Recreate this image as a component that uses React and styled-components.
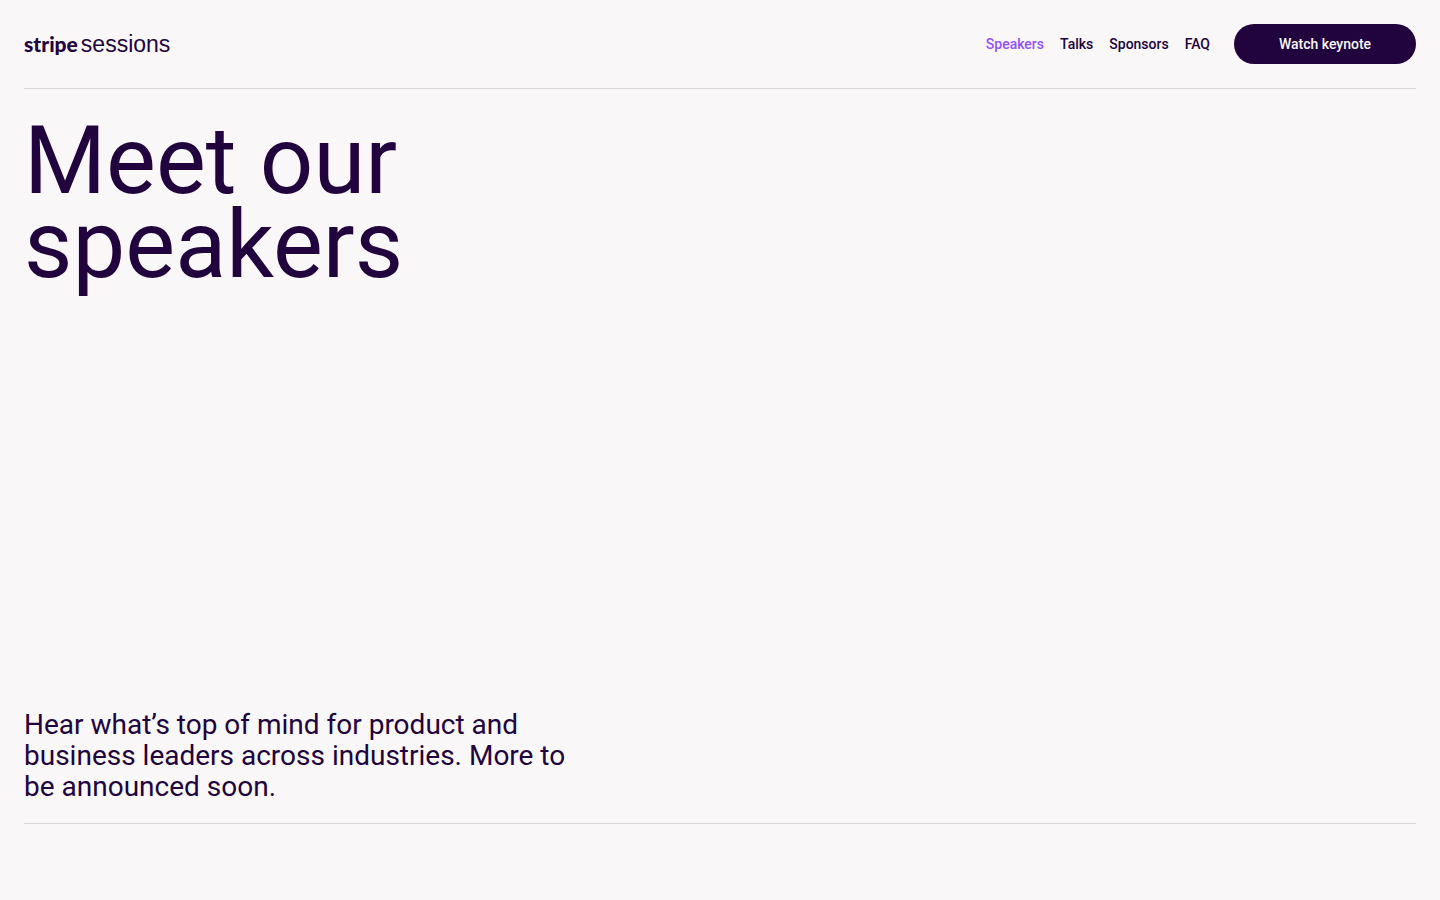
import React from "react";
import styled, { createGlobalStyle } from "styled-components";

const ink = "#21033d";
const violet = "#9450fb";
const line = "#dad8dc";
const paper = "#f9f7f8";

const GlobalStyle = createGlobalStyle`
  *, *::before, *::after { box-sizing: border-box; }
  body {
    margin: 0;
    background: ${paper};
    color: ${ink};
    font-family: Roboto, Arial, sans-serif;
  }
`;

const Page = styled.div`
  display: flex;
  flex-direction: column;
  min-height: 100vh;
  padding: 0 24px 76px;
`;

const Header = styled.header`
  display: flex;
  align-items: center;
  justify-content: space-between;
  padding: 24px 0;
  border-bottom: 1px solid ${line};
`;

const Logo = styled.a`
  display: flex;
  align-items: baseline;
  gap: 3px;
  color: inherit;
  text-decoration: none;
  line-height: 24px;
`;

const Brand = styled.span`
  font-family: Lato, sans-serif;
  font-size: 21px;
  font-weight: 900;
`;

const EventName = styled.span`
  font-family: "Liberation Sans", Arial, sans-serif;
  font-size: 23px;
`;

const Actions = styled.div`
  display: flex;
  align-items: center;
  gap: 24px;
  font-size: 14px;
  font-weight: 500;
  line-height: 22px;
`;

const Nav = styled.nav`
  display: flex;
  gap: 16px;
`;

const NavLink = styled.a`
  color: ${({ $active }) => ($active ? violet : ink)};
  text-decoration: none;
`;

const WatchButton = styled.button`
  width: 182px;
  height: 40px;
  padding: 0;
  border: 0;
  border-radius: 20px;
  background: ${ink};
  color: ${paper};
  font: inherit;
  cursor: pointer;
`;

const Hero = styled.main`
  display: flex;
  flex: 1;
  flex-direction: column;
  justify-content: space-between;
  gap: 48px;
  padding: 30px 0 21px;
  border-bottom: 1px solid ${line};
`;

const Title = styled.h1`
  max-width: 480px;
  margin: 0;
  font-size: 94px;
  font-weight: 400;
  line-height: 84px;
`;

const Intro = styled.p`
  max-width: 560px;
  margin: 0;
  font-size: 28px;
  line-height: 31px;
`;

const links = ["Speakers", "Talks", "Sponsors", "FAQ"];

export default function App() {
  return (
    <Page>
      <GlobalStyle />
      <Header>
        <Logo href="#home">
          <Brand>stripe</Brand>
          <EventName>sessions</EventName>
        </Logo>
        <Actions>
          <Nav aria-label="Main">
            {links.map((label) => (
              <NavLink
                key={label}
                href={`#${label.toLowerCase()}`}
                $active={label === "Speakers"}
                aria-current={label === "Speakers" ? "page" : undefined}
              >
                {label}
              </NavLink>
            ))}
          </Nav>
          <WatchButton type="button">Watch keynote</WatchButton>
        </Actions>
      </Header>
      <Hero>
        <Title>Meet our speakers</Title>
        <Intro>
          Hear what’s top of mind for product and business leaders across
          industries. More to be announced soon.
        </Intro>
      </Hero>
    </Page>
  );
}
